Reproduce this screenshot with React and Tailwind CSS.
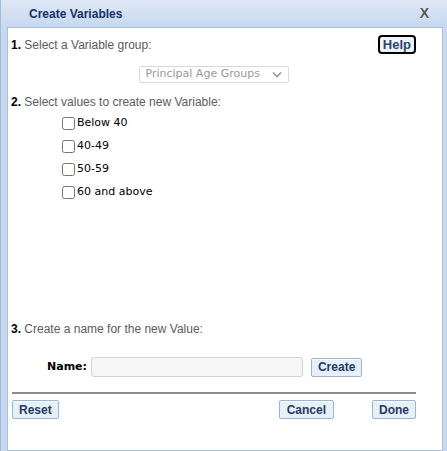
import React from 'react';

const btn = "h-[19px] px-[6px] bg-[#e7eff8] border border-[#98b6da] rounded-[2px] text-[12px] leading-none font-bold text-[#1f3b64] shadow-[inset_0_1px_0_#fff]";

function App() {
    const values = ["Below 40", "40-49", "50-59", "60 and above"];

    return (
        <div className="w-[447px] h-[451px] bg-[#c8d9ef] border-l border-[#a4bcdc] flex flex-col font-['Liberation_Sans',Arial,sans-serif] overflow-hidden">
            <div className="h-[27px] shrink-0 bg-gradient-to-b from-[#dfe8f5] to-[#c6d8ef] flex items-center pl-[28px] pr-[18px]">
                <span className="text-[12px] font-bold text-[#16306b]">Create Variables</span>
                <span className="ml-auto text-[14px] font-bold text-[#555] [text-shadow:0_1px_0_#fff]">X</span>
            </div>

            <div className="flex-1 ml-[6px] mr-[4px] bg-white border border-[#a9c0df] pl-[3px] pr-[26px] flex flex-col">
                <div className="flex items-start pt-[7px] h-[38px]">
                    <p className="mt-[1px] text-[12px] text-[#5b5b5b]"><b className="text-black">1.</b> Select a Variable group:</p>
                    <button className="ml-auto h-[19px] px-[3px] bg-[#eef3f9] border-2 border-black rounded-[4px] text-[13px] leading-none font-bold text-[#2a4670]">Help</button>
                </div>

                <div className="flex justify-center">
                    <div className="w-[150px] h-[17px] border border-[#d9d9d9] rounded-[2px] flex items-center pl-[6px] pr-[6px] font-['DejaVu_Sans',Verdana,sans-serif] text-[11px] text-[#9a9a9a]">
                        <span>Principal Age Groups</span>
                        <svg className="ml-auto" width="10" height="7" viewBox="0 0 10 7">
                            <path d="M1 1.5 L5 5.5 L9 1.5" fill="none" stroke="#999" strokeWidth="1.6" />
                        </svg>
                    </div>
                </div>

                <p className="mt-[10px] text-[12px] text-[#5b5b5b]"><b className="text-black">2.</b> Select values to create new Variable:</p>

                <div className="mt-[5px] pl-[51px] flex flex-col gap-[9px]">
                    {values.map(v => (
                        <label key={v} className="flex items-center h-[14px] font-['DejaVu_Sans',Verdana,sans-serif] text-[11px] text-black">
                            <input type="checkbox" className="m-0 w-[13px] h-[13px]" />
                            <span className="ml-[2px]">{v}</span>
                        </label>
                    ))}
                </div>

                <p className="mt-[121px] text-[12px] text-[#5b5b5b]"><b className="text-black">3.</b> Create a name for the new Value:</p>

                <div className="mt-[19px] flex items-center pl-[36px]">
                    <span className="font-['DejaVu_Sans',Verdana,sans-serif] text-[11px] font-bold text-black">Name:</span>
                    <input type="text" className="ml-[4px] w-[212px] h-[20px] bg-[#f6f6f6] border border-[#d2d2d2] rounded-[3px] outline-none" />
                    <button className={`ml-[8px] ${btn}`}>Create</button>
                </div>

                <div className="mt-[15px] ml-[1px] border-t-2 border-[#8c8c8c]"></div>

                <div className="mt-[6px] ml-[1px] flex items-center">
                    <button className={btn}>Reset</button>
                    <button className={`ml-auto px-[7px] ${btn}`}>Cancel</button>
                    <button className={`ml-[38px] ${btn}`}>Done</button>
                </div>
            </div>
        </div>
    );
}

export default App;
